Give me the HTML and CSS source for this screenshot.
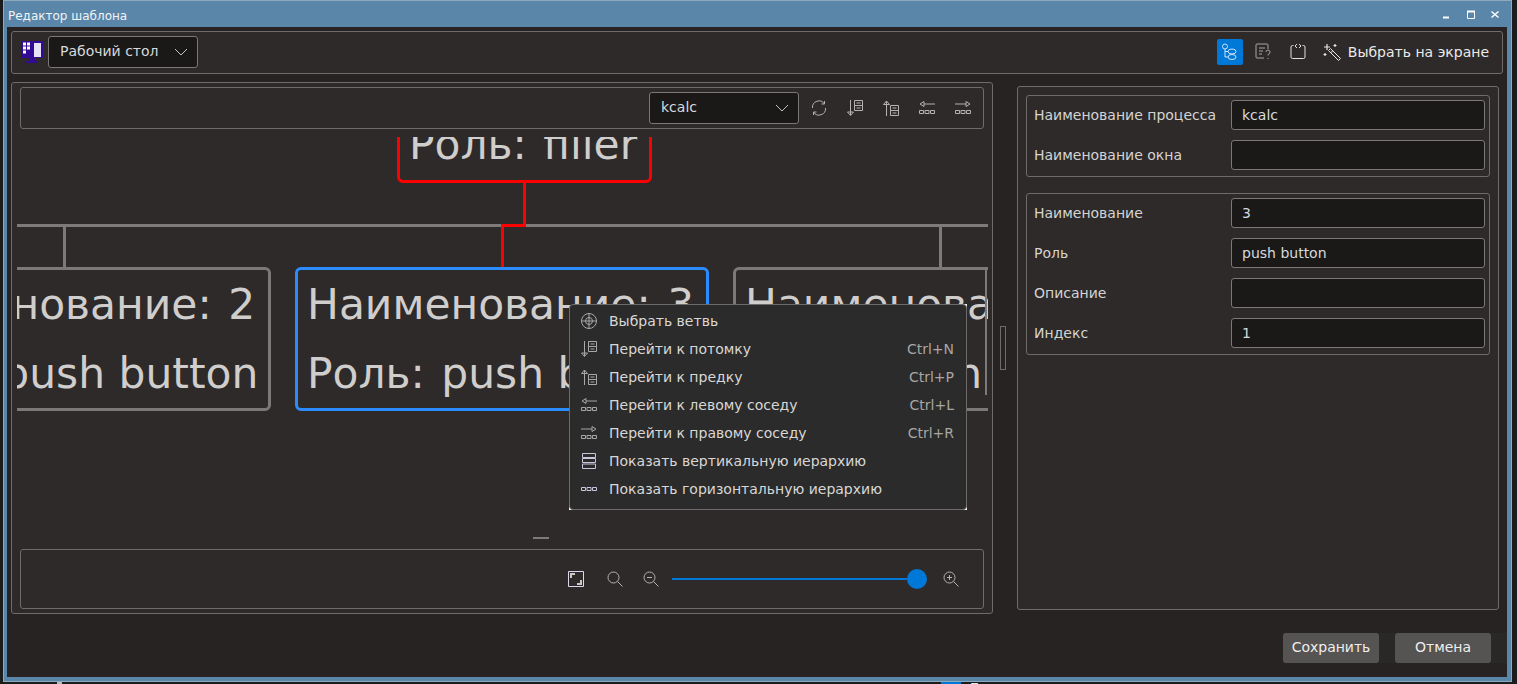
FILE: index.html
```html
<!DOCTYPE html>
<html lang="ru">
<head>
<meta charset="utf-8">
<title>Редактор шаблона</title>
<link rel="stylesheet" href="styles.css">
</head>
<body>
<svg class="defs" width="0" height="0">
  <defs>
    <symbol id="i-down" viewBox="0 0 16 16">
      <path d="M3.500 0v15M.5 12l3 3.500 3-3.500z" fill="none" stroke="currentColor"/>
      <path d="M7.500.5h8v5h-8zM7.500 5.500h8v5h-8zM9.500 3h4M9.500 8h4" fill="none" stroke="currentColor"/>
    </symbol>
    <symbol id="i-up" viewBox="0 0 16 16">
      <path d="M3.500 16V1M.5 4.500l3-3.500 3 3.500z" fill="none" stroke="currentColor"/>
      <path d="M7.500 5.500h8v5h-8zM7.500 10.500h8v5h-8zM9.500 8h4M9.500 13h4" fill="none" stroke="currentColor"/>
    </symbol>
    <symbol id="i-left" viewBox="0 0 16 16">
      <path d="M5 4h11M5 1.500v5l-4-2.500zM.5 10.500h4v3h-4zM6 10.500h4v3h-4zM11.500 10.500h4v3h-4z" fill="none" stroke="currentColor"/>
    </symbol>
    <symbol id="i-right" viewBox="0 0 16 16">
      <path d="M0 4h11M11 1.500v5l4-2.500zM.5 10.500h4v3h-4zM6 10.500h4v3h-4zM11.500 10.500h4v3h-4z" fill="none" stroke="currentColor"/>
    </symbol>
    <symbol id="i-zoom" viewBox="0 0 16 16">
      <circle cx="6.500" cy="6.500" r="5.500" fill="none" stroke="currentColor"/>
      <path d="M10.500 10.500l5 5" fill="none" stroke="currentColor"/>
    </symbol>
  </defs>
</svg>

<div class="window">
  <header class="titlebar">
    <span class="title">Редактор шаблона</span>
    <div class="winctl">
      <svg class="winicon" viewBox="0 0 12 12"><path d="M2 9.500h6" stroke="#fff" stroke-width="2" fill="none"/></svg>
      <svg class="winicon" viewBox="0 0 12 12"><path d="M2.500 3.500h7v7h-7z" stroke="#fff" fill="none"/><path d="M2 3.500h8" stroke="#fff" stroke-width="2"/></svg>
      <svg class="winicon" viewBox="0 0 12 12"><path d="M2.500 3.500l7 6M9.500 3.500l-7 6" stroke="#fff" stroke-width="1.500" fill="none"/></svg>
    </div>
  </header>

  <div class="dialog">
    <div class="box toolbar">
      <svg class="desk" viewBox="0 0 22 22">
        <path d="M0 1a1 1 0 0 1 1-1h20a1 1 0 0 1 1 1v16h-22z" fill="#320a96"/>
        <path d="M8 17h6v3h3v2h-12v-2h3z" fill="#320a96"/>
        <path d="M13 2h7v14h-7z" fill="#e6e3f6"/>
        <path d="M2 1.500h3v3h-3zM6 1.500h3v3h-3zM2 5.500h3v3h-3zM6 5.500h3v3h-3zM2 9.500h3v3h-3z" fill="#fff"/>
      </svg>
      <div class="combo combo-desk">
        <span>Рабочий стол</span>
        <svg class="chev" viewBox="0 0 14 8"><path d="M1 1l6 6 6-6" fill="none" stroke="currentColor"/></svg>
      </div>
      <div class="spacer"></div>
      <button class="tool tool-active">
        <svg class="ic18" viewBox="0 0 18 18" fill="none" stroke="#cfe3f6">
          <circle cx="4" cy="3.500" r="2.500"/><ellipse cx="11" cy="8.500" rx="4" ry="2.500"/><ellipse cx="11" cy="14" rx="4" ry="2.500"/><path d="M4 6v8h3M4 8.500h3"/>
        </svg>
      </button>
      <button class="tool">
        <svg class="ic18" viewBox="0 0 18 18" fill="none" stroke="#a9a7a6">
          <path d="M13 6V2a1 1 0 0 0-1-1H2a1 1 0 0 0-1 1v12a1 1 0 0 0 1 1h7M4 5h6M4 8h4M4 11h3"/><path d="M11 9a2 2 0 1 1 2.500 2l-.5 1.500M13 15v1"/>
        </svg>
      </button>
      <button class="tool">
        <svg class="ic18" viewBox="0 0 18 18" fill="none" stroke="#e4e2e1">
          <path d="M4.500 2.500h-1a1.500 1.500 0 0 0-1.500 1.500v10a1.500 1.500 0 0 0 1.500 1.500h11a1.500 1.500 0 0 0 1.500-1.500v-10a1.500 1.500 0 0 0-1.500-1.500h-1M8 1l-2 2 2 2M10 1l2 2-2 2"/>
        </svg>
      </button>
      <button class="pick">
        <svg class="ic18" viewBox="0 0 18 18" fill="none" stroke="#e8e6e5">
          <path d="M7.500 5.500l10 10-2 2-10-10zM9.500 8l-2 2"/><path d="M4 1v6M1 4h6M12 1v3M10.500 2.500h3M2 10v3M.5 11.500h3" stroke-width="1.200"/>
        </svg>
        <span>Выбрать на экране</span>
      </button>
    </div>

    <div class="main">
      <section class="box left">
        <div class="box topbar">
          <div class="combo combo-proc">
            <span>kcalc</span>
            <svg class="chev" viewBox="0 0 14 8"><path d="M1 1l6 6 6-6" fill="none" stroke="currentColor"/></svg>
          </div>
          <svg class="ic16 gray" viewBox="0 0 16 16" fill="none" stroke="currentColor">
            <path d="M13.500 4A6.500 6.500 0 0 0 1.500 8M2.500 12a6.500 6.500 0 0 0 12-4M13.500 1v3h-3M2.500 15v-3h3"/>
          </svg>
          <svg class="ic16 gray"><use href="#i-down"/></svg>
          <svg class="ic16 gray"><use href="#i-up"/></svg>
          <svg class="ic16 gray"><use href="#i-left"/></svg>
          <svg class="ic16 gray"><use href="#i-right"/></svg>
        </div>

        <div class="canvas">
          <div class="node node-root"><div class="nt"><span class="key">Роль:</span> filler</div></div>
          <div class="wire hline"></div>
          <div class="wire v1"></div>
          <div class="wire v2"></div>
          <div class="red r1"></div>
          <div class="red r2"></div>
          <div class="red r3"></div>
          <div class="node node-2">
            <div class="nt"><span class="key">Наименование:</span> 2</div>
            <div class="nt"><span class="key">Роль:</span> push button</div>
          </div>
          <div class="node node-3">
            <div class="nt"><span class="key">Наименование:</span> 3</div>
            <div class="nt"><span class="key">Роль:</span> push button</div>
          </div>
          <div class="node node-4">
            <div class="nt"><span class="key">Наименование:</span> 4</div>
            <div class="nt"><span class="key">Роль:</span> push button</div>
          </div>
          <div class="wire v3"></div>
          <div class="dash"></div>
        </div>

        <div class="box bottombar">
          <svg class="ic16 fit" viewBox="0 0 16 16" fill="none">
            <path d="M.5.500h15v15h-15z" stroke="#dcd8ec"/><path d="M3 7V3h4M13 9v4h-4" stroke="#c9c7c6" stroke-width="2"/>
          </svg>
          <svg class="ic16 gray mag"><use href="#i-zoom"/></svg>
          <svg class="ic16 gray mag-out" viewBox="0 0 16 16" fill="none" stroke="currentColor">
            <circle cx="6.500" cy="6.500" r="5.500"/><path d="M10.500 10.500l5 5M4 6.500h5"/>
          </svg>
          <div class="slider"><div class="knob"></div></div>
          <svg class="ic16 gray mag-in" viewBox="0 0 16 16" fill="none" stroke="currentColor">
            <circle cx="6.500" cy="6.500" r="5.500"/><path d="M10.500 10.500l5 5M4 6.500h5M6.500 4v5"/>
          </svg>
        </div>
      </section>

      <div class="splitter"><div class="grip"></div></div>

      <aside class="box right">
        <div class="box group">
          <div class="field"><label>Наименование процесса</label><div class="input">kcalc</div></div>
          <div class="field"><label>Наименование окна</label><div class="input"></div></div>
        </div>
        <div class="box group">
          <div class="field"><label>Наименование</label><div class="input">3</div></div>
          <div class="field"><label>Роль</label><div class="input">push button</div></div>
          <div class="field"><label>Описание</label><div class="input"></div></div>
          <div class="field"><label>Индекс</label><div class="input">1</div></div>
        </div>
      </aside>
    </div>

    <footer class="footer">
      <div class="btnrow">
        <button class="btn">Сохранить</button>
        <button class="btn">Отмена</button>
      </div>
    </footer>
  </div>
</div>

<div class="under">
  <span class="under-chip"></span>
  <span class="under-blue"></span>
  <span class="under-text">Error</span>
</div>

<div class="menu-shell">
<nav class="menu">
  <div class="mi">
    <svg class="ic16 mic" viewBox="0 0 16 16" fill="none" stroke="currentColor">
      <circle cx="8" cy="8" r="7.500"/><circle cx="8" cy="8" r="3.500"/><path d="M8 0v16M0 8h16"/>
    </svg>
    <span class="ml">Выбрать ветвь</span>
  </div>
  <div class="mi"><svg class="ic16 mic"><use href="#i-down"/></svg><span class="ml">Перейти к потомку</span><span class="ms">Ctrl+N</span></div>
  <div class="mi"><svg class="ic16 mic"><use href="#i-up"/></svg><span class="ml">Перейти к предку</span><span class="ms">Ctrl+P</span></div>
  <div class="mi"><svg class="ic16 mic"><use href="#i-left"/></svg><span class="ml">Перейти к левому соседу</span><span class="ms">Ctrl+L</span></div>
  <div class="mi"><svg class="ic16 mic"><use href="#i-right"/></svg><span class="ml">Перейти к правому соседу</span><span class="ms">Ctrl+R</span></div>
  <div class="mi">
    <svg class="ic16 mic lilac" viewBox="0 0 16 16" fill="none" stroke="currentColor">
      <path d="M1.500.500h13v4h-13zM1.500 5.500h13v4h-13zM1.500 11h13v4.500h-13z"/>
    </svg>
    <span class="ml">Показать вертикальную иерархию</span>
  </div>
  <div class="mi">
    <svg class="ic16 mic lilac" viewBox="0 0 16 16" fill="none" stroke="currentColor">
      <path d="M.500 6.500h4v3h-4zM6 6.500h4v3h-4zM11.500 6.500h4v3h-4z"/>
    </svg>
    <span class="ml">Показать горизонтальную иерархию</span>
  </div>
</nav>
</div>
</body>
</html>
```

FILE: styles.css
```css
* { box-sizing: border-box; }

html, body {
  margin: 0;
  height: 100%;
}

body {
  position: relative;
  width: 1517px;
  height: 684px;
  overflow: hidden;
  background: #1d1c1c;
  font-family: "DejaVu Sans", "Noto Sans", sans-serif;
  font-size: 14px;
  color: #d6d4d3;
}

.defs { position: absolute; }

.window {
  width: 1509px;
  height: 682px;
  margin: 0 0 0 3px;
  background: #5a86a9;
  border: 1px solid #8ea8bc;
  display: flex;
  flex-direction: column;
}

.titlebar {
  height: 26px;
  flex: none;
  display: flex;
  align-items: center;
  padding: 0 10px 0 4px;
  color: #f1f4f7;
  font-size: 12px;
  justify-content: space-between;
}

.title { padding-top: 3px; }

.winctl { display: flex; gap: 12px; }
.winicon { width: 12px; height: 12px; display: block; }

.dialog {
  flex: 1;
  margin: 0 4px 4px 3px;
  padding: 4px;
  background: #262322;
  display: flex;
  flex-direction: column;
  min-height: 0;
}

.box {
  border: 1px solid #6e6b6a;
  border-radius: 3px;
  background: #2d2a29;
}

.toolbar {
  height: 43px;
  flex: none;
  display: flex;
  align-items: center;
  padding: 0 13px 1px 9px;
}

.desk { width: 22px; height: 22px; flex: none; margin-right: 5px; }

.combo {
  background: #1a1918;
  border: 1px solid #7a7776;
  border-radius: 3px;
  display: flex;
  align-items: center;
  justify-content: space-between;
  color: #d6d9de;
  height: 32px;
}

.combo span { padding-bottom: 2px; }
.combo-desk { width: 150px; padding: 0 9px 0 11px; }
.combo-proc { width: 150px; padding: 0 9px 0 11px; margin-right: -8px; }
.chev { width: 14px; height: 8px; color: #c4c2c1; }

.spacer { flex: 1; }

.tool {
  width: 26px;
  height: 26px;
  margin: 0 8px 0 0;
  padding: 0;
  border: 0;
  border-radius: 2px;
  background: none;
  display: flex;
  align-items: center;
  justify-content: center;
}

.tool-active { background: #0078d7; }
.ic18 { width: 18px; height: 18px; display: block; flex: none; }
.ic16 { width: 16px; height: 16px; display: block; flex: none; }
.gray { color: #b4b2b2; }
.lilac { color: #c9c6df; }

.pick {
  display: flex;
  align-items: center;
  gap: 7px;
  margin-left: 4px;
  padding: 0;
  border: 0;
  background: none;
  color: #ebe9e8;
  font: inherit;
}

.main {
  display: flex;
  margin-top: 8px;
  height: 532px;
  flex: none;
}

.left {
  width: 982px;
  flex: none;
  padding: 4px 8px;
  display: flex;
  flex-direction: column;
}

.topbar {
  height: 42px;
  flex: none;
  display: flex;
  align-items: center;
  justify-content: flex-end;
  padding: 0 12px 0 0;
  gap: 20px;
}

.canvas {
  flex: 1;
  position: relative;
  overflow: hidden;
  margin: 8px -4px 0 -3px;
  font-size: 42.4px;
  color: #d0cecd;
}

.node {
  position: absolute;
  top: 130px;
  height: 144px;
  border: 3px solid #7b7877;
  border-radius: 6px;
  white-space: nowrap;
  overflow: hidden;
}

.nt {
  height: 69px;
  line-height: 69px;
  padding-left: 9px;
}

.key { margin-right: 3px; }

.node-root {
  left: 380px;
  top: -30px;
  width: 255px;
  height: 76px;
  border-color: #f00;
}

.node-root .nt { height: 70px; line-height: 70px; }

.node-2 { left: -161px; width: 415px; }
.node-3 { left: 278px; width: 414px; border-color: #2a8cff; }
.node-4 { left: 716px; width: 420px; }

.wire { position: absolute; background: #7d7b7a; }
.hline { left: 0; right: 0; top: 87px; height: 3px; }
.v1 { left: 46px; top: 87px; width: 3px; height: 43px; }
.v2 { left: 922px; top: 87px; width: 3px; height: 43px; }
.v3 { left: 968px; top: 131px; width: 2px; height: 127px; }

.red { position: absolute; background: #f00; }
.r1 { left: 506px; top: 46px; width: 3px; height: 44px; }
.r2 { left: 484px; top: 87px; width: 25px; height: 3px; }
.r3 { left: 484px; top: 87px; width: 3px; height: 44px; }

.dash {
  position: absolute;
  left: 516px;
  top: 400px;
  width: 16px;
  height: 2px;
  background: #7d7b7a;
}

.bottombar {
  height: 60px;
  flex: none;
  display: flex;
  align-items: center;
  justify-content: flex-end;
  padding: 0 24px 0 0;
}

.mag { margin-left: 23px; }
.mag-out { margin-left: 20px; }
.mag-in { margin-left: 16px; }

.slider {
  width: 255px;
  height: 2px;
  margin-left: 13px;
  background: #0078d7;
  position: relative;
}

.knob {
  position: absolute;
  right: 0;
  top: -9px;
  width: 20px;
  height: 20px;
  border-radius: 50%;
  background: #0078d7;
}

.splitter {
  width: 24px;
  flex: none;
  display: flex;
  align-items: center;
  padding-left: 7px;
}

.grip {
  width: 6px;
  height: 44px;
  border: 1px solid #6e6b6a;
}

.right {
  width: 482px;
  flex: none;
  margin: 4px 0;
  padding: 8px;
  display: flex;
  flex-direction: column;
  gap: 16px;
}

.group {
  padding: 4px 4px 6px 7px;
  display: flex;
  flex-direction: column;
  gap: 10px;
}

.field { display: flex; align-items: center; height: 30px; }
.field label { width: 197px; flex: none; }

.input {
  flex: 1;
  height: 30px;
  background: #1a1918;
  border: 1px solid #7a7776;
  border-radius: 3px;
  padding: 0 10px;
  line-height: 28px;
  color: #d6d9de;
}

.footer {
  display: flex;
  justify-content: flex-end;
  margin: 19px -4px 0 0;
}

.btnrow {
  display: flex;
  gap: 16px;
  padding-right: 16px;
  background: #2a2827;
}

.btn {
  width: 96px;
  height: 30px;
  background: #555453;
  border: 0;
  border-radius: 3px;
  color: #efedec;
  font: inherit;
  padding: 0 0 2px;
}

.under {
  height: 2px;
  overflow: hidden;
  display: flex;
  position: relative;
  font-size: 13px;
  color: #e8e8e8;
  padding-left: 57px;
}

.under-chip { width: 5px; height: 2px; background: #b9b9b9; margin-right: 879px; }
.under-blue { width: 20px; height: 2px; background: #0078d7; margin-right: 9px; }
.under-text { line-height: 12px; font-weight: 700; }

.menu-shell {
  position: absolute;
  left: 569px;
  top: 304px;
  width: 398px;
  height: 206px;
  background:
    linear-gradient(#fff, #fff) right top / 4px 4px no-repeat,
    linear-gradient(#fff, #fff) left bottom / 4px 4px no-repeat,
    linear-gradient(#fff, #fff) right bottom / 4px 4px no-repeat;
}

.menu {
  height: 100%;
  padding: 2px 0;
  background: #2b2b2b;
  border: 1px solid #6e6b6a;
  border-radius: 4px;
  color: #d9d7d6;
}

.mi {
  height: 28px;
  display: flex;
  align-items: center;
  padding: 0 12px 0 11px;
}

.mic { color: #a9a7a7; margin-right: 12px; }
.mic.lilac { color: #c9c6df; }
.ml { flex: 1; }
.ms { color: #a8a6a5; }
```
